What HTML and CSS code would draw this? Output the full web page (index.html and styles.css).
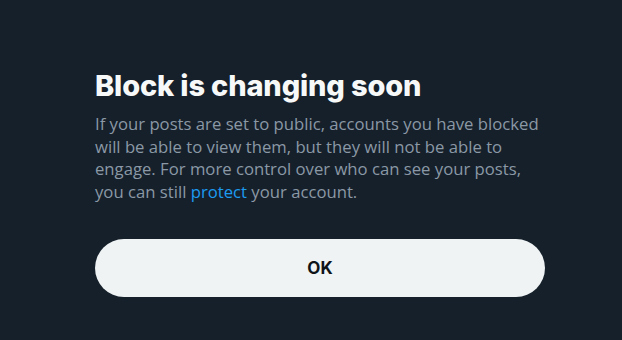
FILE: index.html
```html
<!DOCTYPE html>
<html>
<head>
<meta charset="utf-8">
<link rel="stylesheet" href="styles.css">
</head>
<body>
<div class="dialog">
  <h1 class="title">Block is changing soon</h1>
  <p class="desc">If your posts are set to public, accounts you have blocked will be able to view them, but they will not be able to engage. For more control over who can see your posts, you can still <a class="link" href="#">protect</a> your account.</p>
  <button class="ok">OK</button>
</div>
</body>
</html>
```

FILE: styles.css
```css
html, body {
  margin: 0;
  padding: 0;
  background: #15202b;
}
body {
  width: 622px;
  height: 340px;
  overflow: hidden;
}
.dialog {
  width: 450px;
  padding: 69px 0 0 95px;
  display: flex;
  flex-direction: column;
}
.title {
  margin: 0;
  font-family: Inter, "Open Sans", sans-serif;
  font-weight: 800;
  font-size: 29px;
  line-height: 34px;
  color: #f7f9f9;
  letter-spacing: -0.15px;
}
.desc {
  margin: 10px 0 0;
  font-family: "Open Sans", "Noto Sans", sans-serif;
  font-size: 16.7px;
  line-height: 22.5px;
  color: #8b98a5;
}
.link {
  color: #1d9bf0;
  text-decoration: none;
}
.ok {
  margin-top: 36px;
  height: 58px;
  border: none;
  border-radius: 29px;
  background: #eff3f4;
  color: #0f1419;
  font-family: Inter, "Open Sans", sans-serif;
  font-weight: 700;
  font-size: 17px;
  padding: 0;
}
```
